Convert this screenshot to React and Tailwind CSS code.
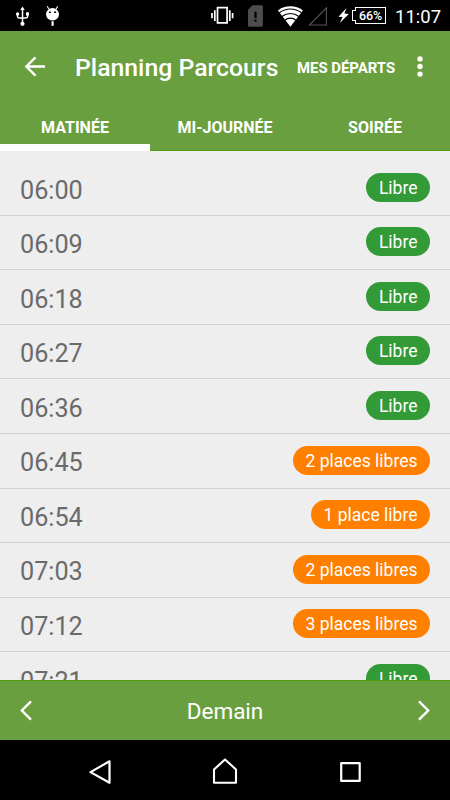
const SLOTS = [
  { time: '06:00', label: 'Libre', free: true },
  { time: '06:09', label: 'Libre', free: true },
  { time: '06:18', label: 'Libre', free: true },
  { time: '06:27', label: 'Libre', free: true },
  { time: '06:36', label: 'Libre', free: true },
  { time: '06:45', label: '2 places libres', free: false },
  { time: '06:54', label: '1 place libre', free: false },
  { time: '07:03', label: '2 places libres', free: false },
  { time: '07:12', label: '3 places libres', free: false },
  { time: '07:21', label: 'Libre', free: true },
];

function StatusBar() {
  return (
    <div className="flex h-[31px] shrink-0 items-center bg-black text-white">
      <svg className="ml-[15px] h-[31px] w-[15px]" viewBox="15 0 15 31" fill="none" stroke="currentColor" strokeWidth="1.5">
        <path d="M22.5 9v15M17.500 14v2.600q0 1.400 1.400 1.400H26q1.600 0 1.600-1.400V14" />
        <path d="M22.5 6.600l2.300 3.400h-4.600z" fill="currentColor" stroke="none" />
        <circle cx="22.5" cy="23.800" r="2.100" fill="currentColor" stroke="none" />
        <circle cx="17.600" cy="14" r="1.700" fill="currentColor" stroke="none" />
        <path d="M26 12.300h3v3.200h-3z" fill="currentColor" stroke="none" />
      </svg>
      <svg className="ml-[15px] h-[31px] w-[15px]" viewBox="45 0 15 31" fill="currentColor">
        <path d="M47.2 6.200L49 9.200M57.700 6.200L56 9.200" stroke="currentColor" strokeWidth="1.100" />
        <ellipse cx="52.500" cy="14.300" rx="6.500" ry="6.200" />
        <path d="M51.500 21.300h2.200v4.500h-2.200z" />
        <path d="M48.900 11.500h2v1.500h-2zM54.100 11.500h2v1.500h-2z" fill="#000" />
      </svg>
      <svg className="ml-[150px] h-[31px] w-[24px]" viewBox="210 0 24 31" fill="none" stroke="currentColor">
        <path d="M217.500 7.700h9.600v15.200h-9.600z" strokeWidth="1.700" />
        <path d="M214.800 10.200v10.800M229.800 10.200v10.800" strokeWidth="1.700" />
        <path d="M212 13v5.200M232.600 13v5.200" strokeWidth="1.700" />
      </svg>
      <svg className="ml-[13px] h-[31px] w-[17px]" viewBox="247 0 17 31">
        <path d="M252.500 5.200h9q1.400 0 1.400 1.400v18.800q0 1.400-1.400 1.400h-12.100q-1.400 0-1.400-1.400V9.700z" fill="#4d4d4d" />
        <path d="M254.400 11.700h2.200v6.200h-2.200zM254.400 19.400h2.200v2.200h-2.200z" fill="#000" />
      </svg>
      <svg className="ml-[13px] h-[31px] w-[27px]" viewBox="277 0 27 31">
        <path d="M290.400 26.700L277.900 10.400q5.500-4.200 12.500-4.200t12.500 4.200z" fill="currentColor" />
        <path d="M279.300 12.700q5-3.700 11.100-3.700t11.100 3.700M282 16.500q3.800-3 8.400-3t8.400 3M284.800 20.300q2.600-2.100 5.600-2.100t5.600 2.100" fill="none" stroke="#000" strokeWidth="1.200" />
      </svg>
      <svg className="ml-[4px] h-[31px] w-[20px]" viewBox="308 0 20 31" fill="none" stroke="#555" strokeWidth="1.100">
        <path d="M309.500 25H326.400V7.800z" />
      </svg>
      <svg className="ml-[10px] h-[31px] w-[12px]" viewBox="338 0 12 31" fill="currentColor">
        <path d="M346.500 8L338.500 16.700l4.100.4-2.900 5.800 9.200-9-4.500-.4z" />
      </svg>
      <div className="ml-[2px] flex h-[17px] w-[34px]">
        <div className="relative w-[3px] self-center">
          <div className="h-[11px] w-[4px] border border-r-0 border-white bg-black" />
        </div>
        <div className="flex w-[31px] items-center justify-center border border-white">
          <span className="pt-px text-[12.500px] leading-none font-medium tracking-[-0.1px]">66%</span>
        </div>
      </div>
      <span className="ml-[9px] pt-[3px] text-[18.500px] leading-none whitespace-nowrap">11:07</span>
    </div>
  );
}

function AppBar() {
  return (
    <div className="flex h-[72px] shrink-0 items-center text-white">
      <svg className="ml-[24px] h-[22px] w-[22px] shrink-0" viewBox="0 0 22 22" fill="none" stroke="currentColor" strokeWidth="2.400">
        <path d="M11.500 1.300L2.300 10.500l9.200 9.200M2.300 10.500H21" />
      </svg>
      <h1 className="ml-[29px] w-[222px] pt-[2px] text-[24.800px] leading-none font-medium whitespace-nowrap">Planning Parcours</h1>
      <span className="w-[99px] pt-[2px] text-[14.900px] leading-none font-bold whitespace-nowrap">MES DÉPARTS</span>
      <svg className="ml-[20px] h-[22px] w-[8px] shrink-0" viewBox="0 0 8 22" fill="currentColor">
        <circle cx="4" cy="2.900" r="2.700" />
        <circle cx="4" cy="10.500" r="2.700" />
        <circle cx="4" cy="18.100" r="2.700" />
      </svg>
    </div>
  );
}

function Tabs() {
  return (
    <div className="grid h-[48px] shrink-0 grid-cols-3 text-center text-[16px] leading-[20px] font-bold text-white">
      <div className="h-[48px] border-b-[7px] border-white pt-[15px]">MATINÉE</div>
      <div className="h-[48px] border-b border-[#529b0b] pt-[15px]">MI-JOURNÉE</div>
      <div className="h-[48px] border-b border-[#529b0b] pt-[15px]">SOIRÉE</div>
    </div>
  );
}

function SlotRow({ time, label, free }) {
  return (
    <li className="flex h-[54.560px] shrink-0 items-start justify-between border-b border-[#d0d0d0] px-[20px] pt-[11.500px]">
      <span className="pt-[2.800px] text-[25.200px] leading-[29px] text-[#6a6a6a]">{time}</span>
      <span className={`h-[29px] rounded-full px-[12.500px] pt-[1px] text-[17.500px] leading-[28px] text-white ${free ? 'bg-[#339a38]' : 'bg-[#ff8000]'}`}>{label}</span>
    </li>
  );
}

export default function App() {
  return (
    <div className="flex h-[800px] w-[450px] flex-col overflow-hidden bg-black font-['Roboto',sans-serif]">
      <StatusBar />
      <header className="flex shrink-0 flex-col bg-[#6a9f3f]">
        <AppBar />
        <Tabs />
      </header>
      <ul className="flex min-h-0 flex-1 flex-col overflow-hidden bg-[#eeeeee] pt-[10.300px]">
        {SLOTS.map((slot) => (
          <SlotRow key={slot.time} {...slot} />
        ))}
      </ul>
      <div className="flex h-[60px] shrink-0 items-center justify-between border-t border-[#529b0b] bg-[#6a9f3f] px-[20px] text-white">
        <svg className="h-[22px] w-[12px]" viewBox="0 0 12 22" fill="none" stroke="currentColor" strokeWidth="2.400">
          <path d="M11 1.300L1.800 10.500l9.200 9.200" />
        </svg>
        <span className="pt-[2px] text-[22.500px] leading-none">Demain</span>
        <svg className="h-[22px] w-[12px]" viewBox="0 0 12 22" fill="none" stroke="currentColor" strokeWidth="2.400">
          <path d="M1 1.300L10.200 10.500 1 19.700" />
        </svg>
      </div>
      <nav className="flex h-[60px] shrink-0 items-center text-white">
        <svg className="ml-[88px] h-[60px] w-[24px]" viewBox="88 740 24 60" fill="none" stroke="currentColor" strokeWidth="2.200" strokeLinejoin="round">
          <path d="M109.500 761.300v21.500L90.500 772.100z" />
        </svg>
        <svg className="ml-[100px] h-[60px] w-[26px]" viewBox="212 740 26 60" fill="none" stroke="currentColor" strokeWidth="2.100" strokeLinejoin="round">
          <path d="M214 769.500l11-10 11 10v13.200h-22z" />
        </svg>
        <svg className="ml-[101px] h-[60px] w-[24px]" viewBox="339 740 24 60" fill="none" stroke="currentColor" strokeWidth="2.200" strokeLinejoin="round">
          <path d="M341.200 763.200h18.500v17.700h-18.500z" />
        </svg>
      </nav>
    </div>
  );
}
